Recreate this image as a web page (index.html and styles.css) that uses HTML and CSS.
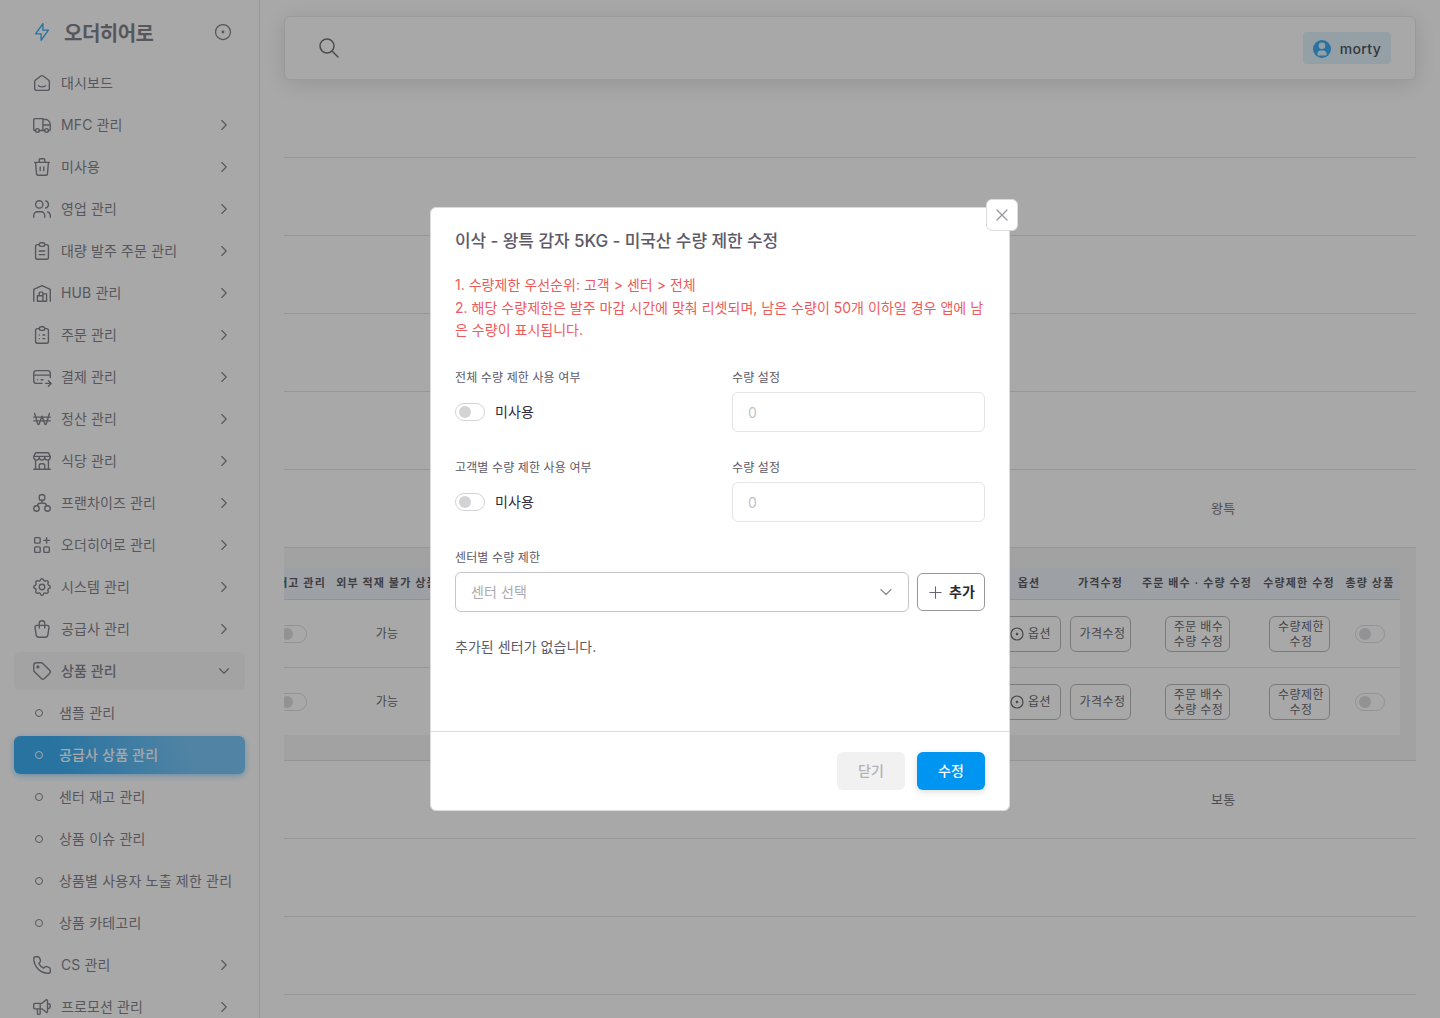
FILE: index.html
```html
<!DOCTYPE html>
<html lang="ko">
<head>
    <meta charset="UTF-8">
    <meta name="viewport" content="width=device-width, initial-scale=1.0">
    <title>오더히어로</title>
    <link rel="stylesheet" href="styles.css">
</head>
<body>
    <svg class="symbols">
        <symbol id="chevron" viewBox="0 0 24 24"><path d="M9 6l6 6-6 6"/></symbol>
        <symbol id="dot-circle" viewBox="0 0 24 24"><circle cx="12" cy="12" r="9"/><circle cx="12" cy="12" r="1"/></symbol>
        <symbol id="clipboard" viewBox="0 0 24 24"><path d="M9 5H7a2 2 0 0 0-2 2v12a2 2 0 0 0 2 2h10a2 2 0 0 0 2-2V7a2 2 0 0 0-2-2h-2"/><rect x="9" y="3" width="6" height="4" rx="2"/></symbol>
    </svg>

    <div class="app">
        <aside class="sidebar">
            <div class="brand">
                <svg class="icon bolt" viewBox="0 0 24 24"><path d="M13 3v7h6l-8 11v-7H5l8-11"/></svg>
                <h1>오더히어로</h1>
                <svg class="icon pin"><use href="#dot-circle"/></svg>
            </div>
            <nav>
                <a class="item"><svg class="icon" viewBox="0 0 24 24"><path d="M19 8.71l-5.333-4.148a2.666 2.666 0 0 0-3.274 0L5.059 8.71a2.665 2.665 0 0 0-1.029 2.105v7.2a2 2 0 0 0 2 2h12a2 2 0 0 0 2-2v-7.2c0-.823-.38-1.6-1.03-2.105M16 15c-2.21 1.333-5.792 1.333-8 0"/></svg><span>대시보드</span></a>
                <a class="item"><svg class="icon" viewBox="0 0 24 24"><circle cx="7" cy="18" r="2"/><circle cx="17" cy="18" r="2"/><path d="M5 18H4a1 1 0 0 1-1-1V6a1 1 0 0 1 1-1h9v13m-4 0h6m4 0h1a1 1 0 0 0 1-1v-5h-8m0-6h3a5 6 0 0 1 5 6"/></svg><span>MFC 관리</span><svg class="arrow"><use href="#chevron"/></svg></a>
                <a class="item"><svg class="icon" viewBox="0 0 24 24"><path d="M4 7h16M10 12v4M14 12v4M5 7l1 12a2 2 0 0 0 2 2h8a2 2 0 0 0 2-2l1-12M9 7V4a1 1 0 0 1 1-1h4a1 1 0 0 1 1 1v3"/></svg><span>미사용</span><svg class="arrow"><use href="#chevron"/></svg></a>
                <a class="item"><svg class="icon" viewBox="0 0 24 24"><circle cx="9" cy="7" r="4"/><path d="M3 21v-2a4 4 0 0 1 4-4h4a4 4 0 0 1 4 4v2M16 3.13a4 4 0 0 1 0 7.75M21 21v-2a4 4 0 0 0-3-3.85"/></svg><span>영업 관리</span><svg class="arrow"><use href="#chevron"/></svg></a>
                <a class="item"><svg class="icon" viewBox="0 0 24 24"><use href="#clipboard"/><path d="M9 12h6M9 16h6"/></svg><span>대량 발주 주문 관리</span><svg class="arrow"><use href="#chevron"/></svg></a>
                <a class="item"><svg class="icon" viewBox="0 0 24 24"><path d="M3 21V8l9-4 9 4v13M13 13h4v8H7v-6h6M13 21v-9a1 1 0 0 0-1-1h-2a1 1 0 0 0-1 1v3"/></svg><span>HUB 관리</span><svg class="arrow"><use href="#chevron"/></svg></a>
                <a class="item"><svg class="icon" viewBox="0 0 24 24"><use href="#clipboard"/><path d="M9 12h.01M13 12h2M9 16h.01M13 16h2"/></svg><span>주문 관리</span><svg class="arrow"><use href="#chevron"/></svg></a>
                <a class="item"><svg class="icon" viewBox="0 0 24 24"><path d="M12 19H6a3 3 0 0 1-3-3V8a3 3 0 0 1 3-3h12a3 3 0 0 1 3 3v4.5M3 10h18M16 19h6M19 16l3 3-3 3M7 15h.01M11 15h2"/></svg><span>결제 관리</span><svg class="arrow"><use href="#chevron"/></svg></a>
                <a class="item"><svg class="icon" viewBox="0 0 24 24"><path d="M4 6l3.245 11.358a.85.85 0 0 0 1.624.035L12 9l3.131 8.393a.85.85 0 0 0 1.624-.035L20 6M21 10H3M21 14H3"/></svg><span>정산 관리</span><svg class="arrow"><use href="#chevron"/></svg></a>
                <a class="item"><svg class="icon" viewBox="0 0 24 24"><path d="M3 21h18M3 7v1a3 3 0 0 0 6 0V7m0 1a3 3 0 0 0 6 0V7m0 1a3 3 0 0 0 6 0V7H3l2-4h14l2 4M5 21V10.85M19 21V10.85M9 21v-4a2 2 0 0 1 2-2h2a2 2 0 0 1 2 2v4"/></svg><span>식당 관리</span><svg class="arrow"><use href="#chevron"/></svg></a>
                <a class="item"><svg class="icon" viewBox="0 0 24 24"><rect x="9" y="3" width="6" height="6" rx="2"/><circle cx="6" cy="18" r="3"/><circle cx="18" cy="18" r="3"/><path d="M12 9v3M7 15c0-2 1.500-3 5-3s5 1 5 3"/></svg><span>프랜차이즈 관리</span><svg class="arrow"><use href="#chevron"/></svg></a>
                <a class="item"><svg class="icon" viewBox="0 0 24 24"><rect x="4" y="4" width="6" height="6" rx="1"/><rect x="4" y="14" width="6" height="6" rx="1"/><rect x="14" y="14" width="6" height="6" rx="1"/><path d="M14 7h6M17 4v6"/></svg><span>오더히어로 관리</span><svg class="arrow"><use href="#chevron"/></svg></a>
                <a class="item"><svg class="icon" viewBox="0 0 24 24"><path d="M10.325 4.317c.426-1.756 2.924-1.756 3.350 0a1.724 1.724 0 0 0 2.573 1.066c1.543-.94 3.310.826 2.370 2.370a1.724 1.724 0 0 0 1.065 2.572c1.756.426 1.756 2.924 0 3.350a1.724 1.724 0 0 0-1.066 2.573c.94 1.543-.826 3.310-2.370 2.370a1.724 1.724 0 0 0-2.572 1.065c-.426 1.756-2.924 1.756-3.350 0a1.724 1.724 0 0 0-2.573-1.066c-1.543.94-3.310-.826-2.370-2.370a1.724 1.724 0 0 0-1.065-2.572c-1.756-.426-1.756-2.924 0-3.350a1.724 1.724 0 0 0 1.066-2.573c-.94-1.543.826-3.310 2.370-2.370 1 .608 2.296.07 2.572-1.065z"/><circle cx="12" cy="12" r="3"/></svg><span>시스템 관리</span><svg class="arrow"><use href="#chevron"/></svg></a>
                <a class="item"><svg class="icon" viewBox="0 0 24 24"><path d="M6.331 8h11.339a2 2 0 0 1 1.977 2.304l-1.255 8.152A3 3 0 0 1 15.426 21H8.574a3 3 0 0 1-2.965-2.544l-1.255-8.152A2 2 0 0 1 6.331 8zM9 11V6a3 3 0 0 1 6 0v5"/></svg><span>공급사 관리</span><svg class="arrow"><use href="#chevron"/></svg></a>
                <a class="item open"><svg class="icon" viewBox="0 0 24 24"><circle cx="7.500" cy="7.500" r="1"/><path d="M3 6v5.172a2 2 0 0 0 .586 1.414l7.710 7.710a2.410 2.410 0 0 0 3.408 0l5.592-5.592a2.410 2.410 0 0 0 0-3.408l-7.710-7.710A2 2 0 0 0 11.172 3H6a3 3 0 0 0-3 3z"/></svg><span>상품 관리</span><svg class="arrow"><use href="#chevron"/></svg></a>
                <a class="item sub"><i></i><span>샘플 관리</span></a>
                <a class="item sub active"><i></i><span>공급사 상품 관리</span></a>
                <a class="item sub"><i></i><span>센터 재고 관리</span></a>
                <a class="item sub"><i></i><span>상품 이슈 관리</span></a>
                <a class="item sub"><i></i><span>상품별 사용자 노출 제한 관리</span></a>
                <a class="item sub"><i></i><span>상품 카테고리</span></a>
                <a class="item"><svg class="icon" viewBox="0 0 24 24"><path d="M5 3h2.500a2 2 0 0 1 1.900 1.300l.9 2.600a2 2 0 0 1-.6 2.100L8.500 10.200a12 12 0 0 0 5.300 5.300l1.200-1.200a2 2 0 0 1 2.100-.5l2.600.9a2 2 0 0 1 1.300 1.900V19a2 2 0 0 1-2 2A16 16 0 0 1 3 5a2 2 0 0 1 2-2"/></svg><span>CS 관리</span><svg class="arrow"><use href="#chevron"/></svg></a>
                <a class="item"><svg class="icon" viewBox="0 0 24 24"><path d="M18 8a3 3 0 0 1 0 6M10 8v11a1 1 0 0 1-1 1H8a1 1 0 0 1-1-1v-5M12 8l4.524-3.770A.9.9 0 0 1 18 4.922v12.156a.9.9 0 0 1-1.476.692L12 14H4a1 1 0 0 1-1-1V9a1 1 0 0 1 1-1h8"/></svg><span>프로모션 관리</span><svg class="arrow"><use href="#chevron"/></svg></a>
            </nav>
        </aside>

        <main class="content">
            <header class="topbar">
                <svg class="icon search" viewBox="0 0 24 24"><circle cx="10" cy="10" r="7"/><path d="M21 21l-6-6"/></svg>
                <div class="user">
                    <svg viewBox="0 0 18 18"><circle class="face" cx="9" cy="9" r="9"/><circle cx="9" cy="5.700" r="3.300"/><path d="M4.500 15.500V13a3 3 0 0 1 3-2.500h3a3 3 0 0 1 3 2.500v2.500z"/></svg>
                    <span>morty</span>
                </div>
            </header>

            <div class="rows">
                <div class="row"></div>
                <div class="row"></div>
                <div class="row"></div>
                <div class="row"></div>
                <div class="row"></div>
                <div class="row"><span>왕특</span></div>
                <div class="nested">
                    <div class="options">
                        <div class="line head">
                            <span class="stock">재고 관리</span><span>외부 적재 불가 상품</span><span></span><span>옵션</span><span>가격수정</span><span>주문 배수 · 수량 수정</span><span>수량제한 수정</span><span>총량 상품</span>
                        </div>
                        <div class="line">
                            <b class="switch"></b><span>가능</span><span></span>
                            <button class="small wide"><svg class="icon"><use href="#dot-circle"/></svg>옵션</button>
                            <button class="small price">가격수정</button>
                            <button class="small multi">주문 배수<br>수량 수정</button>
                            <button class="small limit">수량제한<br>수정</button>
                            <b class="switch"></b>
                        </div>
                        <div class="line">
                            <b class="switch"></b><span>가능</span><span></span>
                            <button class="small wide"><svg class="icon"><use href="#dot-circle"/></svg>옵션</button>
                            <button class="small price">가격수정</button>
                            <button class="small multi">주문 배수<br>수량 수정</button>
                            <button class="small limit">수량제한<br>수정</button>
                            <b class="switch"></b>
                        </div>
                    </div>
                </div>
                <div class="row"><span>보통</span></div>
                <div class="row"></div>
                <div class="row"></div>
                <div class="row"></div>
            </div>
        </main>
    </div>

    <div class="overlay">
        <div class="modal">
            <button class="close"><svg class="icon" viewBox="0 0 24 24"><path d="M18 6L6 18M6 6l12 12"/></svg></button>
            <div class="modal-body">
                <h2>이삭 - 왕특 감자 5KG - 미국산 수량 제한 수정</h2>
                <p class="notice">1. 수량제한 우선순위: 고객 &gt; 센터 &gt; 전체<br>2. 해당 수량제한은 발주 마감 시간에 맞춰 리셋되며, 남은 수량이 50개 이하일 경우 앱에 남<br>은 수량이 표시됩니다.</p>
                <div class="fields">
                    <div class="field">
                        <label>전체 수량 제한 사용 여부</label>
                        <div class="toggle"><b class="switch"></b><span>미사용</span></div>
                    </div>
                    <div class="field">
                        <label>수량 설정</label>
                        <div class="input">0</div>
                    </div>
                    <div class="field">
                        <label>고객별 수량 제한 사용 여부</label>
                        <div class="toggle"><b class="switch"></b><span>미사용</span></div>
                    </div>
                    <div class="field">
                        <label>수량 설정</label>
                        <div class="input">0</div>
                    </div>
                </div>
                <div class="field">
                    <label>센터별 수량 제한</label>
                    <div class="center-select">
                        <div class="input select"><span>센터 선택</span><svg class="arrow down"><use href="#chevron"/></svg></div>
                        <button class="add"><svg class="icon" viewBox="0 0 24 24"><path d="M12 4v16M4 12h16"/></svg><span>추가</span></button>
                    </div>
                </div>
                <p class="empty">추가된 센터가 없습니다.</p>
            </div>
            <footer>
                <button class="btn cancel">닫기</button>
                <button class="btn save">수정</button>
            </footer>
        </div>
    </div>
</body>
</html>
```

FILE: styles.css
```css
* {
    box-sizing: border-box;
}

body {
    margin: 0;
    height: 1018px;
    overflow: hidden;
    font-family: Inter, 'Noto Sans CJK KR', sans-serif;
    font-size: 14px;
    letter-spacing: 0.12px;
    color: #5d5a68;
    background: #fff;
}

h1, h2, p {
    margin: 0;
}

button {
    font: inherit;
    letter-spacing: inherit;
    padding: 0;
}

.symbols {
    display: none;
}

.icon, .arrow {
    flex: none;
    width: 22px;
    height: 22px;
    fill: none;
    stroke: currentColor;
    stroke-width: 1.5;
    stroke-linecap: round;
    stroke-linejoin: round;
}

.app {
    display: flex;
    height: 1018px;
    overflow: hidden;
}

/* sidebar */
.sidebar {
    flex: none;
    width: 260px;
    border-right: 1px solid #e0e0e2;
}

.brand {
    display: flex;
    align-items: center;
    height: 64px;
    padding: 0 26px 0 31px;
}

.brand h1 {
    flex: 1;
    margin-left: 11px;
    font-size: 20px;
    font-weight: 700;
    letter-spacing: -0.5px;
}

.bolt {
    color: #0095f0;
}

.brand .pin {
    width: 20px;
    height: 20px;
}

nav {
    padding: 0 14px;
}

.item {
    display: flex;
    align-items: center;
    height: 38px;
    margin-bottom: 4px;
    padding: 0 12px 0 17px;
    border-radius: 6px;
    white-space: nowrap;
}

.item span {
    flex: 1;
    margin-left: 8px;
    padding-bottom: 2px;
}

.arrow {
    width: 18px;
    height: 18px;
}

.open {
    background: #f4f4f4;
    font-weight: 500;
}

.open .arrow, .down {
    transform: rotate(90deg);
}

.sub {
    padding: 0 0 0 21px;
}

.sub i {
    width: 8px;
    height: 8px;
    border: 1px solid currentColor;
    border-radius: 50%;
}

.sub span {
    margin-left: 16px;
    letter-spacing: 0.18px;
}

.active {
    color: #fff;
    font-weight: 500;
    background: linear-gradient(72deg, #0095f0 20%, #4fb5f6 75%);
    box-shadow: 0 2px 6px rgba(0, 149, 240, 0.48);
}

/* main area */
.content {
    flex: 1;
    min-width: 0;
    padding: 16px 24px 0;
}

.topbar {
    display: flex;
    align-items: center;
    justify-content: space-between;
    height: 64px;
    padding: 0 24px 0 32px;
    border: 1px solid #e0e0e2;
    border-radius: 6px;
    background: #fff;
    box-shadow: 0 4px 22px rgba(0, 0, 0, 0.16);
}

.search {
    width: 24px;
    height: 24px;
    color: #49454f;
}

.user {
    display: flex;
    align-items: center;
    gap: 9px;
    height: 32px;
    padding: 0 10px;
    border-radius: 4px;
    background: #d8edfa;
    color: #10181f;
    font-weight: 500;
    letter-spacing: 0.3px;
}

.user svg {
    width: 18px;
    height: 18px;
    margin-top: 2px;
    fill: #d8edfa;
}

.user .face {
    fill: #0095f0;
}

.row {
    display: flex;
    align-items: center;
    height: 78px;
    border-bottom: 1px solid #dcdcde;
    font-size: 13px;
    letter-spacing: 0.4px;
    color: #4b4951;
}

.row span {
    margin-left: 927px;
    padding-bottom: 2px;
}

.nested {
    height: 213px;
    padding: 20px 16px 25px 0;
    overflow: hidden;
    border-bottom: 1px solid #d8d8da;
    background: #f3f3f3;
}

/* scrolled sideways, so the first column is cut */
.options {
    width: 1147px;
    margin-left: -31px;
    background: #fff;
}

.line {
    display: grid;
    grid-template-columns: 78px 112px 550px 72px 71px 122px 82px 60px;
    align-items: center;
    justify-items: center;
    height: 68px;
    border-bottom: 1px solid #dcdcde;
    font-size: 12px;
    color: #3a383f;
    white-space: nowrap;
}

.line span {
    padding-bottom: 2px;
}

.line:last-child {
    height: 67px;
    border-bottom: 0;
}

.head {
    height: 32px;
    border-color: #cbd2e0;
    background: #e9eff8;
    color: #2a282e;
    font-size: 11px;
    font-weight: 700;
    letter-spacing: 1.15px;
}

.head span {
    padding-bottom: 4px;
}

.head .stock {
    padding-left: 19px;
}

.switch {
    display: block;
    width: 30px;
    height: 18px;
    padding: 2px 3px;
    border: 1px solid #d3d3d6;
    border-radius: 9px;
}

.switch::before {
    content: '';
    display: block;
    width: 12px;
    height: 12px;
    border-radius: 50%;
    background: #d3d3d6;
}

.small {
    display: flex;
    align-items: center;
    justify-content: center;
    height: 36px;
    border: 1px solid #a2a2a4;
    border-radius: 6px;
    background: none;
    color: #3a383f;
    line-height: 15px;
    letter-spacing: 0.4px;
}

.wide {
    width: 64px;
    padding-left: 2px;
    gap: 3px;
}

.wide .icon {
    width: 16px;
    height: 16px;
    stroke-width: 1.8;
}

.price, .limit {
    width: 61px;
    padding-left: 4px;
}

.multi {
    width: 65px;
    padding-left: 3px;
}

/* modal */
.overlay {
    position: absolute;
    inset: 0;
    display: flex;
    align-items: center;
    justify-content: center;
    background: rgba(82, 82, 82, 0.5);
}

.modal {
    position: relative;
    width: 580px;
    height: 604px;
    display: flex;
    flex-direction: column;
    border: 1px solid #dbdbdd;
    border-radius: 6px;
    background: #fff;
}

.close {
    position: absolute;
    top: -9px;
    right: -9px;
    display: flex;
    align-items: center;
    justify-content: center;
    width: 32px;
    height: 32px;
    border: 1px solid #dbdbdd;
    border-radius: 6px;
    background: #fff;
    color: #97959e;
}

.close .icon {
    width: 20px;
    height: 20px;
}

.modal-body {
    flex: 1;
    padding: 20px 24px 0;
}

h2 {
    font-size: 17px;
    font-weight: 500;
    line-height: 26px;
    letter-spacing: -0.08px;
}

.notice {
    margin-top: 20px;
    line-height: 22.5px;
    letter-spacing: 0.02px;
    color: #ee5a5b;
    white-space: nowrap;
}

.fields {
    display: grid;
    grid-template-columns: 253px 253px;
    gap: 26px 24px;
    margin: 27.5px 0 26px;
}

.field label {
    display: block;
    height: 16px;
    margin-bottom: 7px;
    padding-top: 1px;
    font-size: 12px;
    line-height: 16px;
}

.fields .field {
    height: 64px;
}

.toggle {
    display: flex;
    align-items: center;
    gap: 10px;
    height: 40px;
    color: #2f2b3d;
}

.toggle span {
    padding-bottom: 2px;
}

.input {
    display: flex;
    align-items: center;
    height: 40px;
    padding: 0 15px;
    border: 1px solid #e4e4e6;
    border-radius: 6px;
    color: #c3c2c6;
}

.center-select {
    display: flex;
    align-items: center;
    gap: 8px;
}

.select {
    flex: 1;
    justify-content: space-between;
    border-color: #c6c5ca;
    color: #acaab1;
}

.select span, .add span {
    padding-bottom: 2px;
}

.select .arrow {
    width: 20px;
    height: 20px;
    margin-right: -3px;
    color: #8f8d96;
}

.add {
    display: flex;
    align-items: center;
    justify-content: center;
    gap: 5px;
    width: 68px;
    height: 38px;
    border: 1px solid #98989b;
    border-radius: 6px;
    background: #fff;
    color: #2c2a30;
    font-weight: 700;
}

.add .icon {
    width: 17px;
    height: 17px;
    color: #66646c;
}

.empty {
    margin-top: 24px;
    line-height: 22px;
    letter-spacing: 0.05px;
}

footer {
    display: flex;
    justify-content: flex-end;
    gap: 12px;
    height: 79px;
    padding: 20px 24px;
    border-top: 1px solid #dbdbdd;
}

.btn {
    width: 68px;
    height: 38px;
    padding-bottom: 2px;
    border: 0;
    border-radius: 6px;
    font-weight: 500;
}

.cancel {
    background: #f1f1f1;
    color: #b3b2b6;
}

.save {
    background: #0095f0;
    color: #fff;
    box-shadow: 0 2px 6px rgba(47, 43, 61, 0.16);
}
```
